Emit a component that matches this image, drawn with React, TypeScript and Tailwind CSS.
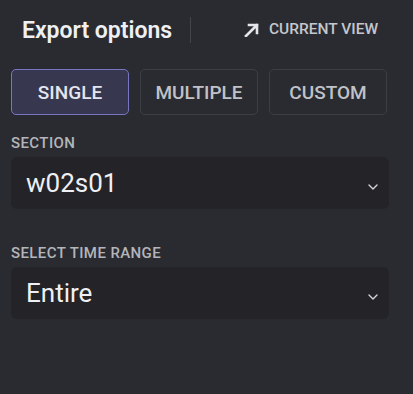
import { useState } from 'react';

const MODES = ['SINGLE', 'MULTIPLE', 'CUSTOM'];

function Chevron() {
  return (
    <svg width="10" height="6" viewBox="0 0 10 6" fill="none" className="shrink-0">
      <path d="M1 1l4 4 4-4" stroke="#d4d5da" strokeWidth="1.4" strokeLinecap="round" strokeLinejoin="round" />
    </svg>
  );
}

function SelectBox({ label, value }: { label: string; value: string }) {
  return (
    <div className="flex flex-col">
      <p className="text-[15px] font-medium text-[#b3b5bb] leading-none tracking-[0.4px]">{label}</p>
      <div className="mt-[6px] h-[52px] rounded-[6px] bg-[#232328] flex items-center justify-between pl-[15px] pr-[11px]">
        <span className="text-[26px] text-[#eef0f4] leading-none">{value}</span>
        <span className="pt-[8px]">
          <Chevron />
        </span>
      </div>
    </div>
  );
}

export default function App() {
  const [mode, setMode] = useState('SINGLE');

  return (
    <div className="w-[413px] h-[394px] bg-[#2a2b30] font-['Roboto',sans-serif] pt-[17px]">
      {/* Header */}
      <div className="flex items-center h-[26px]">
        <h2 className="ml-[22px] w-[148px] text-[23px] font-semibold text-[#eef0f4] leading-none whitespace-nowrap">Export options</h2>
        <div className="ml-[20px] w-px h-[26px] bg-[#44454b]" />
        <button className="ml-[53px] flex items-center text-[#c4c7ce]">
          <svg width="16" height="14" viewBox="0 0 16 14" fill="none">
            <path d="M2 13L13 2M5 2h8v8" stroke="#e4e5e9" strokeWidth="2.6" strokeLinecap="square" />
          </svg>
          <span className="ml-[9px] text-[15.5px] font-medium leading-none">CURRENT VIEW</span>
        </button>
      </div>

      <div className="ml-[11px] w-[378px]">
        {/* Mode tabs */}
        <div className="mt-[26px] flex gap-[11px]">
          {MODES.map((m) => (
            <button
              key={m}
              onClick={() => setMode(m)}
              className={`w-[118px] h-[46px] pt-[2px] rounded-[5px] border text-[19px] font-medium ${
                m === mode
                  ? 'bg-[#37374f] border-[#7775c4] text-[#e4e5ee]'
                  : 'bg-transparent border-[#3d3e44] text-[#c0c2c8]'
              }`}
            >
              {m}
            </button>
          ))}
        </div>

        <div className="mt-[21px]">
          <SelectBox label="SECTION" value="w02s01" />
        </div>
        <div className="mt-[37px]">
          <SelectBox label="SELECT TIME RANGE" value="Entire" />
        </div>
      </div>
    </div>
  );
}
